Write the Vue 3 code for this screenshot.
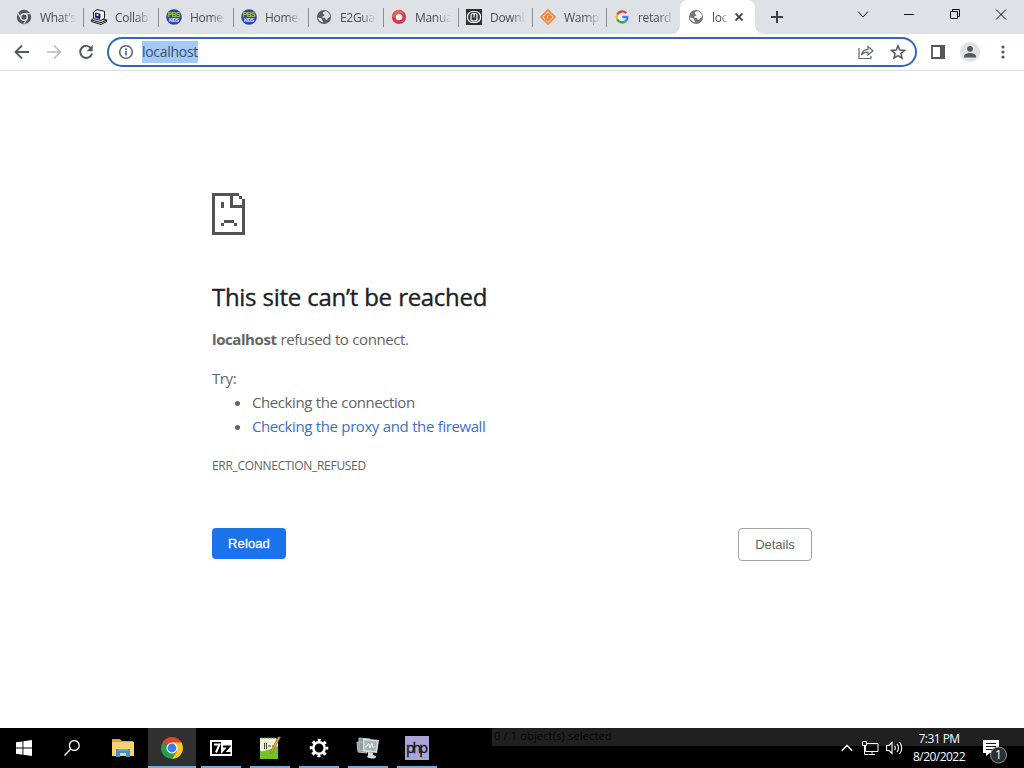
<template>
    <div class="screen">
        <!-- Tab strip -->
        <header class="tabs">
            <div v-for="(tab, i) in tabs" :key="i" class="tab" :class="{ 'tab--active': tab.active }">
                <svg class="tab__icon" width="16" height="16" viewBox="0 0 16 16">
                    <g v-if="tab.icon === 'chrome'">
                        <circle cx="8" cy="8" r="7.200" fill="#515459" />
                        <circle cx="8" cy="8" r="3.300" fill="#515459" stroke="#dee1e6" stroke-width="1.500" />
                        <path d="M8 4.700h6.400M5.100 9.700L2 4.200M10.900 9.700L7.800 15" stroke="#dee1e6" stroke-width="1.200" />
                    </g>
                    <g v-else-if="tab.icon === 'computer'" stroke="#171717" stroke-width="1" stroke-linejoin="round">
                        <path d="M.5 11L3 9l12.500 2v1.500L10 15.500.5 12.500z" fill="#e8e8e8" />
                        <path d="M.5 11l9.500 2.700 5.500-2.700" fill="none" />
                        <path d="M2.500 3L6 .6l7.500 1.700v7L10 11.500l-7.500-2z" fill="#f1f1f1" />
                        <path d="M4.500 4L9 5.200v4.300L4.500 8.300z" fill="#16206f" stroke="#16206f" />
                        <path d="M5.500 5h2v1.800h-2z" fill="#fff" stroke="none" />
                    </g>
                    <g v-else-if="tab.icon === 'pbs'">
                        <circle cx="8" cy="8" r="7.800" fill="#2f43a8" />
                        <text x="8" y="8.200" class="pbs pbs--top" textLength="13">PBS</text>
                        <text x="8" y="13" class="pbs pbs--bottom" textLength="10">KIDS</text>
                    </g>
                    <g v-else-if="tab.icon === 'globe'">
                        <circle cx="8" cy="8" r="7.100" :fill="tab.active ? '#74777b' : '#5a5d62'" />
                        <path d="M9 2.200c-2 .5-2.500 1.600-2 2.600.4.800 1.500.4 1.500 1.400 0 1-1.700.7-2.300 1.500-.5.800.9 1 1.900 1 1.500 0 1 2 2.400 2 1.300 0 1-2 2.600-2.200 1-.2 1.300-1 .9-2.300C13.300 4 11.400 2.200 9 2.200zM1.800 8.500c.8 2.900 2.500 4.300 5.200 5 .5-.8 0-1.500-.6-2-.7-.6.1-1.400-.9-2-1-.5-2-.9-3.700-1z" :fill="tab.active ? '#fff' : '#dee1e6'" />
                    </g>
                    <g v-else-if="tab.icon === 'ring'">
                        <circle cx="8" cy="8" r="5.200" fill="#fff" stroke="#d63a55" stroke-width="3.800" />
                        <path d="M2.800 8A5.200 5.200 0 0 1 12 4.700" fill="none" stroke="#ea6050" stroke-width="3.800" />
                    </g>
                    <g v-else-if="tab.icon === 'down'">
                        <path d="M0 0h16v16H0z" fill="#2c2d2f" />
                        <rect x="1.500" y="2.500" width="13" height="11" rx="5" fill="#35373a" stroke="#fff" stroke-width="1.200" />
                        <path d="M5 11.500V6.500a2 2 0 0 1 2-2h2a2 2 0 0 1 2 2v5M5 10a3 2 0 0 0 6 0M8 4.500v4" fill="none" stroke="#fff" stroke-width="1.200" />
                    </g>
                    <g v-else-if="tab.icon === 'wamp'">
                        <path d="M8 1L15 8 8 15 1 8z" fill="#f5d3b5" stroke="#ec8a3d" stroke-width="1.700" />
                        <path d="M8 3.500L12.500 8 8 12.500 3.500 8z" fill="#ee8128" />
                        <path d="M8.500 6L7.300 8l1.200 2" fill="none" stroke="#fff" stroke-width=".7" />
                    </g>
                    <g v-else fill="none" stroke-width="2.400">
                        <circle cx="8" cy="8" r="6.800" fill="#f4f5f7" stroke="none" />
                        <path d="M12.100 4.200A5.300 5.300 0 0 0 3.300 5.500" stroke="#e34133" />
                        <path d="M3.300 5.500a5.300 5.300 0 0 0 0 5" stroke="#f5bb15" />
                        <path d="M3.300 10.500a5.300 5.300 0 0 0 8.400 1.600" stroke="#33a653" />
                        <path d="M11.700 12.100A5.300 5.300 0 0 0 13.300 8H8.200" stroke="#4083ef" />
                    </g>
                </svg>
                <span class="tab__title">{{ tab.title }}</span>
                <svg v-if="tab.active" class="tab__close" width="8" height="8" viewBox="0 0 8 8">
                    <path d="M.5.5l7 7M7.500.5l-7 7" stroke="#3c4043" stroke-width="1.800" />
                </svg>
            </div>
            <svg class="tabs__new" width="12" height="12" viewBox="0 0 12 12">
                <path d="M6 0v12M0 6h12" stroke="#3c4043" stroke-width="2" />
            </svg>
            <div class="window-buttons">
                <svg width="46" height="28" viewBox="0 0 46 28"><path d="M18 11.500l5 5.500 5-5.500" /></svg>
                <svg width="46" height="28" viewBox="0 0 46 28"><path d="M18 14.500h10" /></svg>
                <svg width="46" height="28" viewBox="0 0 46 28"><path d="M18.500 11.500h7v7h-7zM20.500 11.500v-2h7v7h-2" /></svg>
                <svg width="46" height="28" viewBox="0 0 46 28"><path d="M18 9.500l10 10M28 9.500l-10 10" /></svg>
            </div>
        </header>

        <!-- Toolbar with the address bar -->
        <nav class="toolbar">
            <svg class="toolbar__nav" width="16" height="16" viewBox="0 0 16 16">
                <path d="M15 8H2M8 1.500L1.500 8 8 14.500" fill="none" stroke="#54575b" stroke-width="1.800" />
            </svg>
            <svg class="toolbar__nav" width="16" height="16" viewBox="0 0 16 16">
                <path d="M1 8h13M8 1.500L14.500 8 8 14.500" fill="none" stroke="#babcbe" stroke-width="1.700" />
            </svg>
            <svg class="toolbar__nav" width="16" height="16" viewBox="0 0 16 16">
                <path d="M13.200 4.500A6 6 0 1 0 14 9.500" fill="none" stroke="#54575b" stroke-width="2" />
                <path d="M14.700 1v6.200H8.500z" fill="#54575b" />
            </svg>
            <div class="address">
                <svg width="16" height="16" viewBox="0 0 16 16">
                    <circle cx="8" cy="8" r="6.300" fill="none" stroke="#5f6368" stroke-width="1.500" />
                    <path d="M8 7v4.500M8 4.300v1.600" stroke="#5f6368" stroke-width="1.600" />
                </svg>
                <span class="address__text">localhost</span>
                <svg class="address__share" width="16" height="16" viewBox="0 0 16 16" fill="none" stroke="#65686c" stroke-width="1.200">
                    <path d="M1 4v10.500h12V12" />
                    <path d="M3.500 11c.5-3.500 2.500-5.500 6.500-5.700V2.500L15 6.700 10 11V8.200C7 8 5 9 3.500 11z" />
                </svg>
                <svg width="16" height="16" viewBox="0 0 16 16">
                    <path d="M8 1.800l1.800 4.300 4.700.4-3.600 3.100 1.100 4.500L8 11.700l-4 2.400 1.100-4.500-3.600-3.100 4.700-.4z" fill="none" stroke="#54575b" stroke-width="1.500" />
                </svg>
            </div>
            <svg class="toolbar__panel" width="14" height="14" viewBox="0 0 14 14">
                <path d="M1 1h12v12H1z" fill="none" stroke="#54575b" stroke-width="1.800" />
                <path d="M9 0h5v14H9z" fill="#54575b" />
            </svg>
            <svg class="toolbar__user" width="20" height="20" viewBox="0 0 20 20">
                <circle cx="10" cy="10" r="10" fill="#dfe1e6" />
                <circle cx="10" cy="6.800" r="2.900" fill="#54585f" />
                <path d="M4 15.500v-1.300c0-2.200 3.500-3.200 6-3.200s6 1 6 3.200v1.300z" fill="#54585f" />
            </svg>
            <svg class="toolbar__menu" width="4" height="14" viewBox="0 0 4 14" fill="#54575b">
                <circle cx="2" cy="2" r="1.600" />
                <circle cx="2" cy="7" r="1.600" />
                <circle cx="2" cy="12" r="1.600" />
            </svg>
        </nav>

        <!-- Error page -->
        <main class="error">
            <svg class="error__icon" width="33" height="42" viewBox="0 0 33 42" shape-rendering="crispEdges" fill="#535353">
                <path d="M0 0h27v3H3v36h27V6h3v36H0z" />
                <path d="M27 3h3v3h-3zM18 3h3v9h9v3H18zM9 9h3v6H9zM12 27h10v3H12zM9 30h3v3H9zM22 30h3v3h-3z" />
            </svg>
            <h1>This site can’t be reached</h1>
            <p class="error__summary"><strong>localhost</strong> refused to connect.</p>
            <p class="error__try">Try:</p>
            <ul>
                <li><span class="tip">Checking the connection</span></li>
                <li><a class="tip tip--link">Checking the proxy and the firewall</a></li>
            </ul>
            <div class="error__code">ERR_CONNECTION_REFUSED</div>
            <div class="error__buttons">
                <button class="reload">Reload</button>
                <button class="details">Details</button>
            </div>
        </main>

        <!-- Windows taskbar -->
        <footer class="taskbar">
            <div class="taskbar__item taskbar__item--start">
                <svg width="16" height="16" viewBox="0 0 16 16" fill="#fff">
                    <path d="M0 2.300L6.500 1.400v6.200H0zM7.400 1.200L16 0v7.600H7.400zM0 8.500h6.500v6.200L0 13.800zM7.400 8.500H16V16l-8.600-1.200z" />
                </svg>
            </div>
            <div class="taskbar__item taskbar__item--search">
                <svg width="16" height="16" viewBox="0 0 16 16" fill="none" stroke="#fff" stroke-width="1.300">
                    <circle cx="10.300" cy="5.500" r="4.900" />
                    <path d="M6.800 9L.5 15.500" />
                </svg>
            </div>
            <div class="taskbar__item taskbar__item--files">
                <svg width="22" height="18" viewBox="0 0 22 18">
                    <path d="M0 0h8l2 2h11v15H0z" fill="#dca632" />
                    <path d="M0 3h22v14H0z" fill="#f6d273" />
                    <path d="M4 10h14v8h-4v-4H8v4H4z" fill="#3e91cc" />
                    <path d="M6 10h10v1.500H6z" fill="#64b2df" />
                </svg>
            </div>
            <div v-for="app in apps" :key="app" class="taskbar__app" :class="{ 'taskbar__app--active': app === 'chrome' }">
                <svg width="24" height="24" viewBox="0 0 24 24">
                    <g v-if="app === 'chrome'">
                        <path d="M12 12L2.500 6.500A11 11 0 0 1 21.500 6.500z" fill="#e34234" />
                        <path d="M12 12L2.500 6.500A11 11 0 0 0 12 23l5-8z" fill="#299d4b" />
                        <path d="M12 6.500h9.500A11 11 0 0 1 12 23l5-8z" fill="#fbc91d" />
                        <circle cx="12" cy="12" r="5.500" fill="#fff" />
                        <circle cx="12" cy="12" r="4.400" fill="#397ee9" />
                    </g>
                    <g v-else-if="app === '7z'">
                        <path d="M1 4h22v16H1z" fill="#fff" />
                        <path d="M3 6h9v12H3z" fill="#000" />
                        <path d="M5 8.500h5.500L7 16.500" fill="none" stroke="#fff" stroke-width="2" />
                        <path d="M14 10.500h6l-5.500 6.500h7" fill="none" stroke="#000" stroke-width="2.200" />
                    </g>
                    <g v-else-if="app === 'notepad'">
                        <path d="M2 2h16l2 2v19H2z" fill="#eef3d5" />
                        <path d="M2 15c5 1 10-2 18-5v13H2z" fill="#70c226" />
                        <path d="M4 1v2M7 1v2M10 1v2M13 1v2M16 1v2" stroke="#777" />
                        <path d="M6.500 7v6M8.500 7v6M10 10h3M14 10h3" stroke="#434a38" />
                        <path d="M22.500 1l-8 15-2 2 .5-3L20 1z" fill="#e5a62b" stroke="#83643b" stroke-width=".6" />
                    </g>
                    <g v-else-if="app === 'settings'" fill="none" stroke="#fff">
                        <circle cx="12" cy="12" r="5.700" stroke-width="2.500" />
                        <circle cx="12" cy="12" r="7.900" stroke-width="2.700" stroke-dasharray="3.100 3.104" stroke-dashoffset="1.550" />
                    </g>
                    <g v-else-if="app === 'monitor'">
                        <path d="M3 2l11 1v12L3 14zM1 6l10 1v10L2 16z" fill="#8f9b9c" stroke="#b8c1c1" />
                        <path d="M7 2.500l16 1.500-2 13-14-1.500z" fill="#d5dddd" />
                        <path d="M8.500 4.500l12.500 1-1.500 9.500-11-1z" fill="#a3b3b3" />
                        <path d="M9 11l2-1 1.500-3 1.500 5 2-5 1 4.500 2-1" fill="none" stroke="#eefaf8" stroke-width="1" />
                        <path d="M12 16l5 .5v2.500c2 .5 3 1 3 2s-2 1.500-4 1.500-5-1-5-2l1-1z" fill="#d9dddd" />
                    </g>
                    <g v-else>
                        <path d="M0 0h24v24H0z" fill="#aaa5d5" />
                        <text x="12" y="17" class="php" textLength="22">php</text>
                    </g>
                </svg>
            </div>
            <div class="taskbar__status">0 / 1 object(s) selected</div>
            <div class="tray">
                <svg width="12" height="8" viewBox="0 0 12 8"><path d="M.7 6.700L6 1.400l5.300 5.300" fill="none" stroke="#fff" stroke-width="1.400" /></svg>
                <svg class="tray__network" width="17" height="16" viewBox="0 0 17 16" fill="none" stroke="#fff">
                    <path d="M5 3.500h11v8H3.500V6M7 14.500h6M10 12v2.500M.5 1.500h4v4h-4zM2.500 5.500v9h4" />
                </svg>
                <svg class="tray__sound" width="18" height="14" viewBox="0 0 18 14" fill="none" stroke="#fff" stroke-width="1.100">
                    <path d="M.6 4.500H3L6 1.500v11L3 9.500H.6zM8.500 4.800q1.700 2.200 0 4.400M11 3q3 4 0 8M13.500 1q4.500 6 0 12" />
                </svg>
                <div class="tray__clock">
                    <div class="tray__time">7:31 PM</div>
                    <div>8/20/2022</div>
                </div>
                <svg class="tray__notes" width="25" height="24" viewBox="0 0 25 24">
                    <path d="M0 0h16v13H7l-4 3v-3H0z" fill="#fff" />
                    <path d="M3 3.500h10M3 6.500h10M3 9.500h7" stroke="#111" />
                    <circle cx="15.500" cy="15" r="8" fill="#303030" stroke="#929292" />
                    <text x="15.500" y="19" text-anchor="middle" class="count">1</text>
                </svg>
            </div>
        </footer>
    </div>
</template>

<script setup>
// Open browser tabs, left to right
const tabs = [
    { title: "What's", icon: 'chrome' },
    { title: 'Collab', icon: 'computer' },
    { title: 'Home', icon: 'pbs' },
    { title: 'Home', icon: 'pbs' },
    { title: 'E2Gua', icon: 'globe' },
    { title: 'Manua', icon: 'ring' },
    { title: 'Downl', icon: 'down' },
    { title: 'Wamp', icon: 'wamp' },
    { title: 'retard', icon: 'google' },
    { title: 'loc', icon: 'globe', active: true },
];

// Running programs in the taskbar
const apps = ['chrome', '7z', 'notepad', 'settings', 'monitor', 'php'];
</script>

<style>
body {
    margin: 0;
    overflow: hidden;
}
</style>

<style scoped>
.screen {
    display: flex;
    flex-direction: column;
    width: 1024px;
    height: 768px;
    background: #fff;
    font-family: "Open Sans", "Noto Sans", sans-serif;
}

svg {
    display: block;
    flex: none;
}

.tabs {
    display: flex;
    height: 34px;
    padding-left: 8px;
    background: #dee1e6;
}

.tab {
    position: relative;
    display: flex;
    flex: none;
    align-items: center;
    box-sizing: border-box;
    width: 75px;
    padding: 0 0 0 8px;
    color: #494c50;
    font-size: 12px;
}

.tab:nth-child(7),
.tab:nth-child(8),
.tab:nth-child(9) {
    width: 74px;
}

.tab:not(.tab--active)::after {
    content: "";
    position: absolute;
    right: -1px;
    top: 8px;
    width: 1px;
    height: 19px;
    background: #898c91;
}

.tab:nth-child(9)::after {
    display: none;
}

.tab--active {
    border-radius: 8px 8px 0 0;
    background: #fff;
}

.tab--active::before {
    content: "";
    position: absolute;
    left: -8px;
    right: -8px;
    bottom: 0;
    height: 8px;
    background:
        radial-gradient(circle at 0 0, transparent 7.5px, #fff 8px) left / 8px 8px no-repeat,
        radial-gradient(circle at 100% 0, transparent 7.5px, #fff 8px) right / 8px 8px no-repeat;
}

.tab__title {
    width: 38px;
    margin-left: 8px;
    overflow: hidden;
    white-space: nowrap;
    letter-spacing: -0.3px;
    mask-image: linear-gradient(90deg, #000 55%, transparent 95%);
}

.tab--active .tab__title {
    width: 17px;
}

.tab__close {
    margin-left: 6px;
}

.tabs__new {
    margin: 11px 0 0 16px;
}

.window-buttons {
    display: flex;
    margin-left: auto;
    fill: none;
    stroke: #111;
    stroke-width: 1;
}

.toolbar {
    display: flex;
    align-items: center;
    box-sizing: border-box;
    height: 37px;
    padding: 0 0 0 14px;
    border-bottom: 1px solid #dfe1e3;
}

.toolbar__nav {
    margin-right: 16px;
}

.address {
    display: flex;
    flex: none;
    align-items: center;
    box-sizing: border-box;
    width: 810px;
    height: 30px;
    margin-left: -3px;
    padding: 0 9px;
    border: 2px solid #3269b5;
    border-radius: 15px;
}

.address__text {
    height: 22px;
    margin-left: 8px;
    background: #a5c9f6;
    color: #36516f;
    font-size: 14px;
    line-height: 22px;
    letter-spacing: -0.3px;
}

.address__share {
    margin: 0 16px 0 auto;
}

.toolbar__panel {
    margin-left: 14px;
}

.toolbar__user {
    margin-left: 15px;
}

.toolbar__menu {
    margin-left: 21px;
}

.error {
    flex: 1;
    width: 600px;
    margin: 0 auto;
    color: #646464;
    font-size: 15px;
    line-height: 24px;
    letter-spacing: -0.42px;
    word-spacing: 0.4px;
}

.error__icon {
    margin-top: 122px;
}

h1 {
    margin: 47px 0 0;
    color: #202124;
    font-size: 24px;
    font-weight: 500;
    line-height: 29px;
    letter-spacing: -0.3px;
    white-space: nowrap;
    -webkit-text-stroke: 0.35px #202124;
}

p {
    margin: 0;
}

.error__summary {
    margin-top: 16px;
}

.error__try {
    margin-top: 15px;
}

ul {
    margin: 0;
    padding-left: 40px;
}

.tip--link {
    color: #3c72bb;
}

.error__code {
    margin-top: 16px;
    font-size: 12px;
    letter-spacing: -0.3px;
}

.error__buttons {
    display: flex;
    justify-content: space-between;
    margin-top: 50px;
}

button {
    width: 74px;
    height: 31px;
    padding: 0;
    border: 0;
    border-radius: 4px;
    font: 13px "Liberation Sans", sans-serif;
}

.reload {
    background: #1a73e8;
    color: #fff;
    letter-spacing: 0.1px;
    -webkit-text-stroke: 0.3px #fff;
}

.details {
    height: 33px;
    border: 1px solid #a2a2a2;
    background: #fff;
    color: #646464;
}

.taskbar {
    position: relative;
    display: flex;
    height: 40px;
    background: #000;
}

.taskbar__item {
    display: flex;
    align-items: center;
    justify-content: center;
    width: 48px;
}

.taskbar__item--files {
    width: 52px;
    margin-right: 1px;
    box-sizing: border-box;
    padding-left: 1px;
}

.taskbar__app {
    display: flex;
    flex: none;
    align-items: center;
    justify-content: center;
    box-sizing: border-box;
    width: 40px;
    height: 40px;
    margin-right: 9px;
    border-bottom: 2px solid #70addc;
    padding-top: 2px;
}

.taskbar__app--active {
    width: 48px;
    margin: 0 5px 0 -1px;
    background: #303030;
}

.taskbar__status {
    position: absolute;
    left: 492px;
    right: 0;
    top: 0;
    height: 18px;
    padding-left: 2px;
    background: #202020;
    color: #050505;
    font-size: 11px;
    line-height: 16px;
    letter-spacing: 0.17px;
}

.tray {
    position: relative;
    display: flex;
    align-items: center;
    margin-left: auto;
    padding-right: 16px;
}

.tray__network {
    margin-left: 9px;
}

.tray__sound {
    margin-left: 7px;
}

.tray__clock {
    width: 56px;
    margin-left: 7px;
    color: #fff;
    font-size: 12px;
    line-height: 18px;
    letter-spacing: -0.53px;
    text-align: center;
    white-space: nowrap;
}

.tray__notes {
    margin: 7px 0 0 16px;
}

.pbs {
    font: bold 7px "Liberation Sans", sans-serif;
    text-anchor: middle;
}

.pbs--top {
    fill: #a5c944;
}

.pbs--bottom {
    fill: #e0e5ff;
    font-size: 5px;
}

.php {
    fill: #111;
    stroke: #111;
    stroke-width: 0.3px;
    font: 14.5px "Open Sans", sans-serif;
    text-anchor: middle;
}

.count {
    fill: #fff;
    font-size: 12px;
}
</style>
